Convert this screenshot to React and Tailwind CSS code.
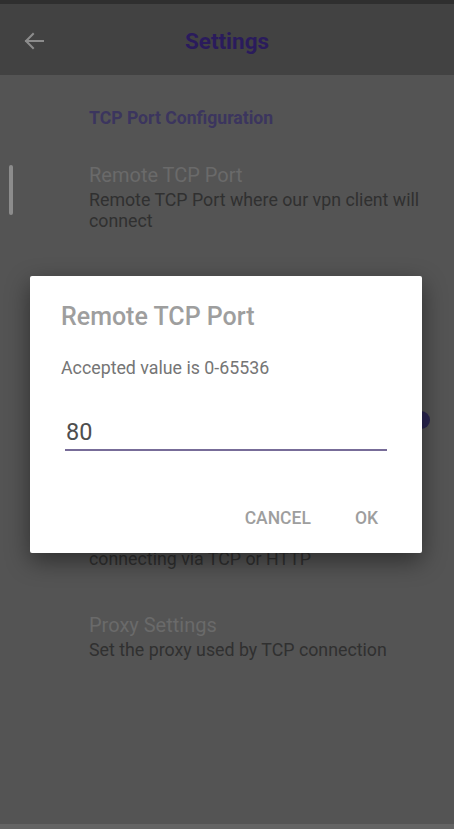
import React from "react";

export default function App() {
  return (
    <div className="relative w-[454px] h-[829px] overflow-hidden bg-[#545454] flex flex-col" style={{ fontFamily: "Roboto, 'Noto Sans', sans-serif" }}>
      <div className="h-[4px] bg-[#2f2f2f] shrink-0" />
      <div className="relative h-[71px] bg-[#424242] flex items-center justify-center shrink-0">
        <svg className="absolute left-[23px] top-[26px]" width="22" height="22" viewBox="0 0 22 22" fill="none" stroke="#8c8c8c" strokeWidth="2" strokeLinecap="square">
          <path d="M20 11H3" />
          <path d="M10 4L3 11L10 18" />
        </svg>
        <span className="text-[22.5px] font-bold text-[#2a1b5c] leading-[28px] pt-[2px]">Settings</span>
      </div>

      <div className="relative flex-1 flex flex-col pl-[89px] pr-[30px]">
        <div className="absolute left-[9px] top-[90px] w-[4px] h-[50px] rounded-full bg-[#8c8c8c]" />
        <div className="mt-[32px] text-[17.6px] font-bold text-[#3b355e] leading-[22px]">TCP Port Configuration</div>

        <div className="mt-[34px] text-[20px] text-[#6a6a6a] leading-[24px]">Remote TCP Port</div>
        <div className="mt-[2px] text-[17.8px] text-[#303030] leading-[21px]">Remote TCP Port where our vpn client will connect</div>

        <div className="relative h-[317px] shrink-0">
          <div className="absolute right-[-6px] top-[180px] w-[18px] h-[18px] rounded-full bg-[#2a2550]" />
        </div>

        <div className="text-[17.8px] text-[#303030] leading-[21px]">connecting via TCP or HTTP</div>

        <div className="mt-[44px] text-[20px] text-[#6a6a6a] leading-[24px]">Proxy Settings</div>
        <div className="mt-[2px] text-[17.8px] text-[#303030] leading-[21px]">Set the proxy used by TCP connection</div>

        <div className="absolute left-0 right-0 bottom-0 h-[5px] bg-[#646464]" />
      </div>

      <div className="absolute left-[30px] top-[276px] w-[392px] h-[277px] bg-white rounded-[2px] shadow-[0_8px_24px_rgba(0,0,0,0.45)] flex flex-col pl-[31px] pr-[35px]">
        <div className="mt-[26px] text-[25px] font-medium text-[#9e9e9e] leading-[30px]">Remote TCP Port</div>
        <div className="mt-[25px] text-[17.8px] text-[#757575] leading-[22px]">Accepted value is 0-65536</div>
        <div className="mt-[39px] ml-[4px] pl-[1px] text-[23.5px] text-[#4e4e4e] leading-[28px] pb-[3px] border-b-2 border-[#776c98]">80</div>
        <div className="mt-[56px] flex justify-end gap-[44px] pr-[9px] text-[17.5px] font-medium text-[#9e9e9e] leading-[22px]">
          <span>CANCEL</span>
          <span>OK</span>
        </div>
      </div>
    </div>
  );
}
